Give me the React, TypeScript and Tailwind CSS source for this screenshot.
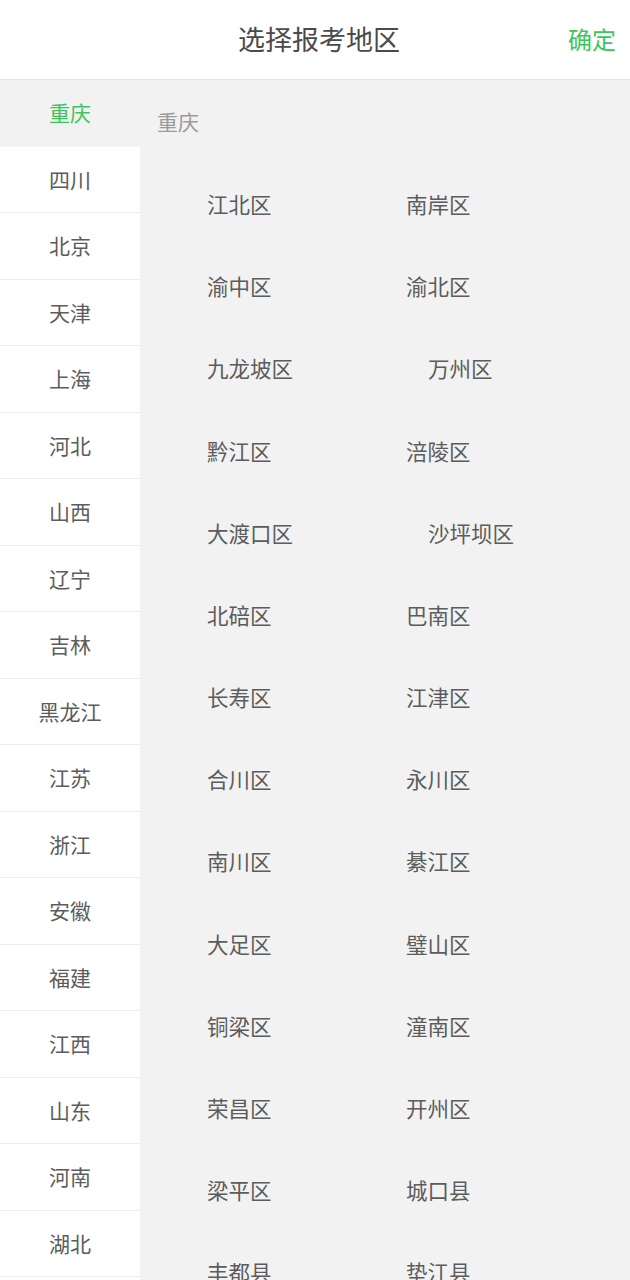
import React from "react";

const provinces = ["重庆","四川","北京","天津","上海","河北","山西","辽宁","吉林","黑龙江","江苏","浙江","安徽","福建","江西","山东","河南","湖北","湖南"];

const districts: [string, boolean][] = [
  ["江北区", false],["南岸区", false],
  ["渝中区", false],["渝北区", false],
  ["九龙坡区", false],["万州区", true],
  ["黔江区", false],["涪陵区", false],
  ["大渡口区", false],["沙坪坝区", true],
  ["北碚区", false],["巴南区", false],
  ["长寿区", false],["江津区", false],
  ["合川区", false],["永川区", false],
  ["南川区", false],["綦江区", false],
  ["大足区", false],["璧山区", false],
  ["铜梁区", false],["潼南区", false],
  ["荣昌区", false],["开州区", false],
  ["梁平区", false],["城口县", false],
  ["丰都县", false],["垫江县", false],
];

export default function App() {
  return (
    <div
      className="w-[630px] h-[1280px] overflow-hidden bg-white flex flex-col"
      style={{ fontFamily: '"Noto Sans CJK SC", "Noto Sans", sans-serif' }}
    >
      <header className="h-[80px] shrink-0 flex items-center justify-center relative border-b border-[#e2e2e2] bg-white pl-[8px]">
        <span className="text-[27px] text-[#4a4a4a]">选择报考地区</span>
        <span className="absolute right-[14px] top-[21px] text-[24px] text-[#3dc55c]">确定</span>
      </header>
      <div className="flex flex-1 min-h-0">
        <div className="w-[140px] shrink-0 flex flex-col bg-white">
          {provinces.map((p, i) => (
            <div
              key={p}
              className={
                "h-[66.5px] shrink-0 flex items-center justify-center text-[21px] border-b border-[#ececec] " +
                (i === 0 ? "bg-[#f2f2f2] text-[#3dc55c] border-transparent" : "text-[#5c5c5c]")
              }
            >
              {p}
            </div>
          ))}
        </div>
        <div className="flex-1 bg-[#f2f2f2] flex flex-col">
          <div className="h-[83px] shrink-0 pl-[17px] pt-[26px] text-[21px] text-[#9a9a9a]">重庆</div>
          <div className="grid grid-cols-[199px_1fr] pl-[67px]">
            {districts.map(([d, indent]) => (
              <div
                key={d}
                className={
                  "h-[82.2px] flex items-center text-[21.5px] text-[#5c5c5c] " + (indent ? "pl-[22px]" : "")
                }
              >
                {d}
              </div>
            ))}
          </div>
        </div>
      </div>
    </div>
  );
}
